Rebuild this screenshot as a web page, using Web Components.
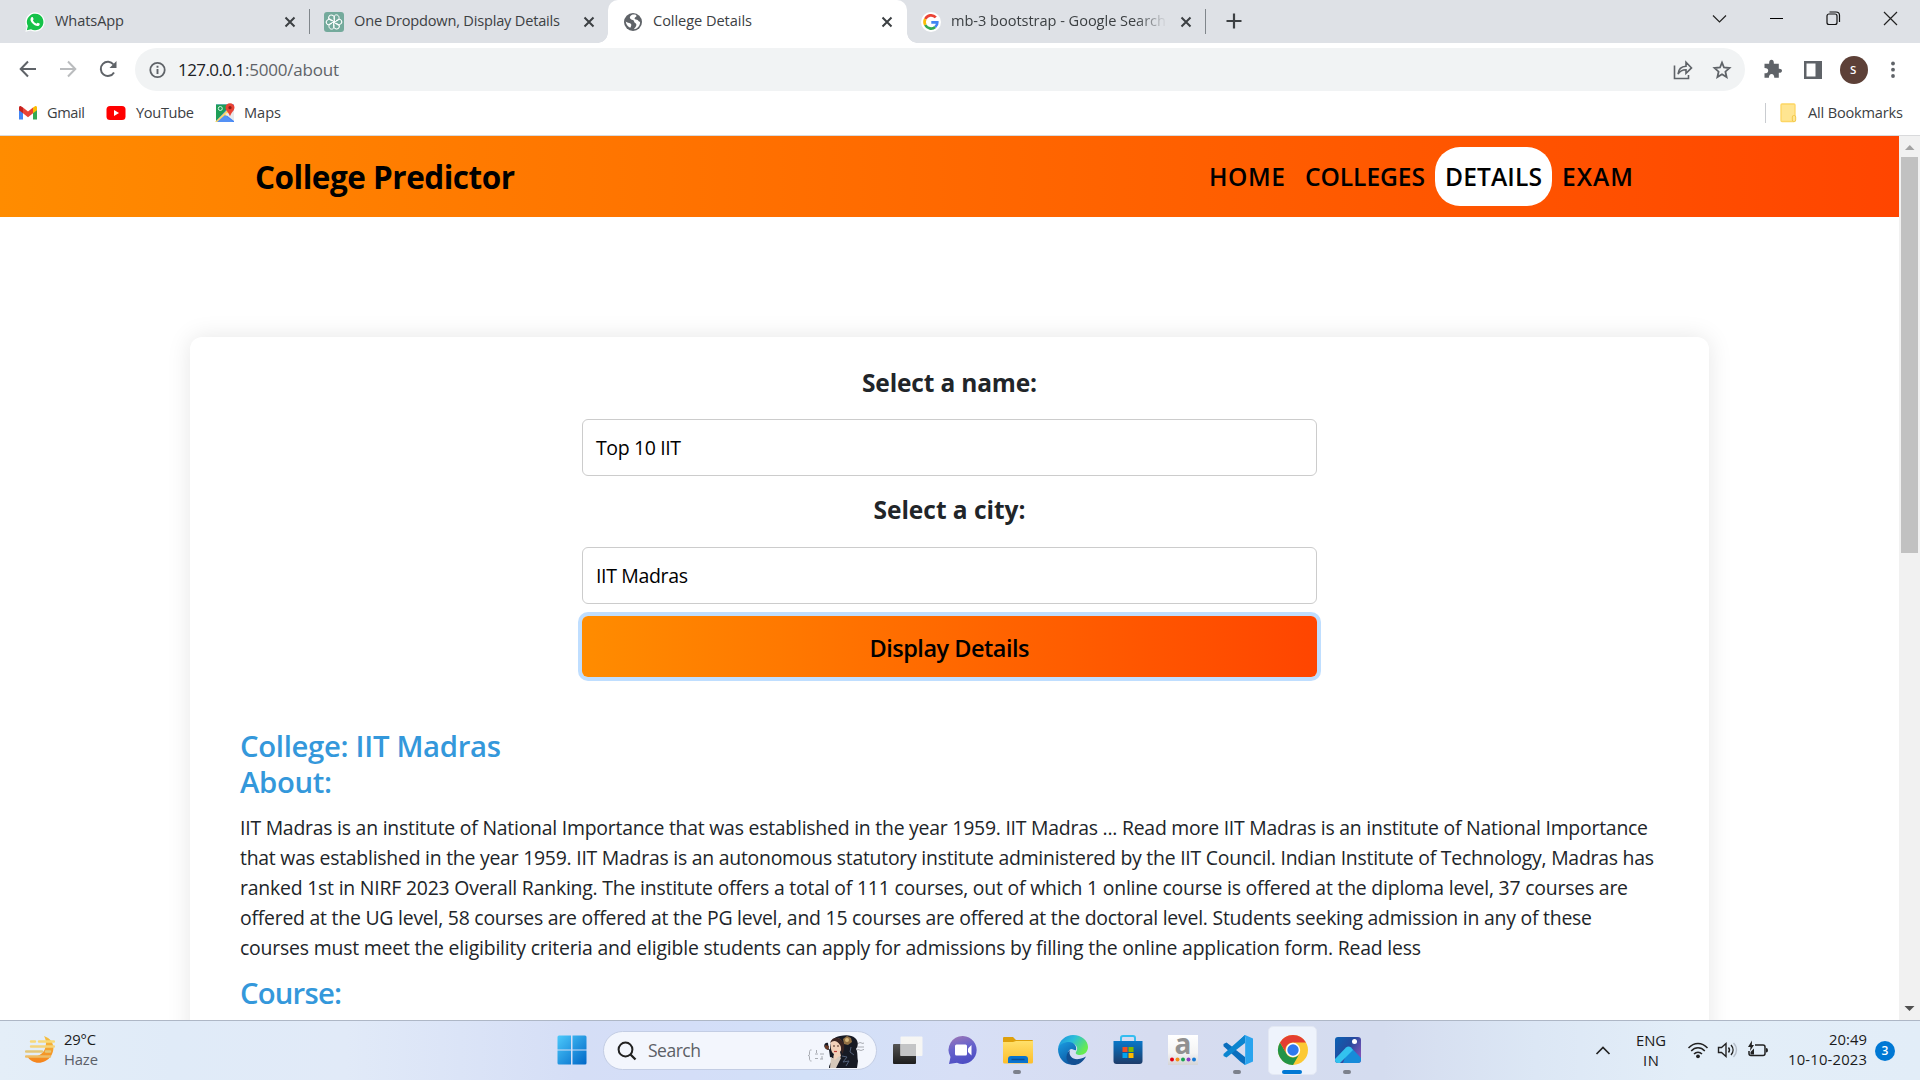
<!DOCTYPE html>
<html lang="en">
<head>
<meta charset="utf-8">
<title>College Details</title>
<style>
html,body{margin:0;padding:0}
body{width:1920px;height:1080px;overflow:hidden;background:#fff;font-family:"Open Sans","Noto Sans",sans-serif}
</style>
</head>
<body>
<desktop-screen></desktop-screen>
<script>
const define = (name, html) => {
  const t = document.createElement('template');
  t.innerHTML = html;
  customElements.define(name, class extends HTMLElement {
    constructor(){ super(); this.attachShadow({mode:'open'}).append(t.content.cloneNode(true)); }
  });
};

define('desktop-screen', `
<style>:host{display:flex;flex-direction:column;width:1920px;height:1080px;overflow:hidden}</style>
<tab-strip></tab-strip><address-row></address-row><bookmark-row></bookmark-row><page-view></page-view><task-bar></task-bar>`);

/* ---------- browser frame ---------- */
define('browser-tab', `
<style>
:host{display:flex;box-sizing:border-box;height:43px;position:relative;flex:none;align-items:center;color:#3c4043}
.i{display:flex;width:20px;height:20px;flex:none;margin-right:10px}
.x{margin-left:auto;display:block}
.sep{position:absolute;right:0;top:9px;width:1px;height:25px;background:#80868b}
:host([active]) .sep,:host([nosep]) .sep{display:none}
:host([active]){background:#fff;border-radius:10px 10px 0 0}
:host([active])::before,:host([active])::after{content:"";position:absolute;bottom:0;width:10px;height:10px}
:host([active])::before{left:-10px;background:radial-gradient(circle at 0 0,transparent 9.5px,#fff 10px)}
:host([active])::after{right:-10px;background:radial-gradient(circle at 100% 0,transparent 9.5px,#fff 10px)}
</style>
<span class="i"><slot name="icon"></slot></span><slot></slot>
<svg class="x" width="12" height="12" viewBox="0 0 12 12"><path d="M1.5 1.5l9 9M10.5 1.5l-9 9" stroke="#3c4043" stroke-width="2"/></svg>
<span class="sep"></span>`);

define('tab-strip', `
<style>
:host{display:flex;height:43px;background:#dee1e6;flex:none}
browser-tab:nth-of-type(1){width:310px;padding:0 14px 0 25px}
browser-tab:nth-of-type(2){width:298px;padding:0 13px 0 14px}
browser-tab:nth-of-type(3){width:299px;padding:0 14px 0 15px;z-index:1}
browser-tab:nth-of-type(4){width:299px;padding:0 14px 0 14px}
fit-text{margin-bottom:2px}
.fade{display:block;width:214px;overflow:hidden;-webkit-mask:linear-gradient(90deg,#000 185px,transparent 216px);mask:linear-gradient(90deg,#000 185px,transparent 216px)}
.plus{margin:13px 0 0 20px}
.win{display:flex;margin-left:auto;height:36px;align-items:center;padding-right:1px}
.win svg{width:57px;height:20px}
</style>
<browser-tab>
 <svg slot="icon" width="20" height="20" viewBox="0 0 20 20"><path d="M.4 19.8l1.4-5A9.6 9.6 0 1 1 5.6 18.400z" fill="#fff"/><path d="M1.800 18.300l1.100-4.200A8.300 8.300 0 1 1 6 17.200z" fill="#15c249"/><path d="M6.500 5.300c.5-.5 1.200-.4 1.400.1l.7 1.700c.1.400-.700 1.100-.6 1.400.8 1.500 1.900 2.500 3.400 3.200.4.100 1-1.100 1.400-.9l1.700.8c.5.300.1 1.400-.4 1.900-1 .9-2.500.7-4.300-.2-1.900-1-3.200-2.500-4-4.200-.6-1.500-.2-2.900.7-3.800z" fill="#fff"/></svg>
 <fit-text s="14.600" l="41" w="69">WhatsApp</fit-text></browser-tab>
<browser-tab nosep>
 <svg slot="icon" width="20" height="20" viewBox="0 0 20 20"><rect width="20" height="20" rx="3" fill="#74aa9c"/><g fill="none" stroke="#fff" stroke-width="1"><path d="M10 7.500V5.200c0-3 4.500-3.300 5 0v2.300l-5 3"/><path d="M10 7.500V5.200c0-3 4.500-3.300 5 0v2.300l-5 3" transform="rotate(60 10 10)"/><path d="M10 7.500V5.200c0-3 4.500-3.300 5 0v2.300l-5 3" transform="rotate(120 10 10)"/><path d="M10 7.500V5.200c0-3 4.500-3.300 5 0v2.300l-5 3" transform="rotate(180 10 10)"/><path d="M10 7.500V5.200c0-3 4.500-3.300 5 0v2.300l-5 3" transform="rotate(240 10 10)"/><path d="M10 7.500V5.200c0-3 4.500-3.300 5 0v2.300l-5 3" transform="rotate(300 10 10)"/></g></svg>
 <fit-text s="14.600" l="41" w="206">One Dropdown, Display Details</fit-text></browser-tab>
<browser-tab active>
 <svg slot="icon" width="20" height="20" viewBox="0 0 20 20"><circle cx="10" cy="10" r="9" fill="#5f6368"/><path d="M9.600 2.600c-2.800 1-3.500 3.200-2 4.500 1.500 1.200 3.400.8 3.500 2.500.1 1.500 2.300 1.500 2.300 3.200 0 2-1.800 3.200-2.600 4.500 3.200-.2 6.500-3 6.300-7.500-.8 0-1.500-.5-2-1.400-.5-1-1.800-.6-3-1.200-1-.6-.3-1.800.5-2.200 1-.5 1-1.400.5-2.100-1-.4-2.300-.5-3.500-.3zM2.700 9.500c.5 3.600 2.800 5.600 4.600 6.200 1-1.800 1.600-3.400.2-4.200-1.500-.9-3.300-.7-4.800-2z" fill="#fff"/></svg>
 <fit-text s="14.600" l="41" w="99">College Details</fit-text></browser-tab>
<browser-tab>
 <svg slot="icon" width="20" height="20" viewBox="0 0 20 20"><circle cx="10" cy="10" r="10" fill="#fff"/><g fill="none" stroke-width="2.700"><path d="M14.800 5.400A6.400 6.400 0 0 0 4.300 7" stroke="#ea4335"/><path d="M4.300 7a6.400 6.400 0 0 0 0 6" stroke="#fbbc05"/><path d="M4.300 13a6.400 6.400 0 0 0 9.900 2" stroke="#34a853"/><path d="M14.200 15c1.600-1.300 2.200-3 2.100-4.700h-6" stroke="#4285f4"/></g></svg>
 <span class="fade"><fit-text s="14.600" l="41" w="215">mb-3 bootstrap - Google Search</fit-text></span></browser-tab>
<svg class="plus" width="16" height="16" viewBox="0 0 16 16"><path d="M8 .5v15M.5 8h15" stroke="#3c4043" stroke-width="2.200"/></svg>
<div class="win">
<svg viewBox="0 0 57 20"><path d="M22 7.500l6.500 6.500L35 7.500" fill="none" stroke="#222" stroke-width="1.200"/></svg>
<svg viewBox="0 0 57 20"><path d="M22 10.500h13" stroke="#000" stroke-width="1"/></svg>
<svg viewBox="0 0 57 20"><g fill="none" stroke="#111" stroke-width="1.200"><rect x="22" y="6" width="10" height="10.500" rx="2"/><path d="M24.500 4h6.500c2 0 3.500 1.300 3.500 3.300V14"/></g></svg>
<svg viewBox="0 0 57 20"><path d="M22 4l13 13M35 4L22 17" stroke="#222" stroke-width="1.200"/></svg>
</div>`);

define('address-row', `
<style>
:host{display:flex;height:53px;align-items:center;background:#fff;flex:none;box-sizing:border-box;padding:0 0 0 18px}
svg{display:block;flex:none}
.b{margin:0 20px 1px 0}
.omni{display:flex;align-items:center;width:1610px;height:43px;border-radius:22px;background:#f1f3f4;margin-left:-3px;box-sizing:border-box;padding:0 13px 0 12px}
.sp{flex:1}.u{margin-left:11px;color:#202124}.v{color:#5f6368}
.r{display:flex;align-items:center}
.av{width:28px;height:28px;border-radius:50%;background:#5d4037;color:#fff;display:flex;align-items:center;justify-content:center;margin:0 17px 0 17px}
</style>
<svg class="b" width="20" height="20" viewBox="0 0 20 20"><path d="M10 2.500L2.700 10l7.300 7.500M3 10h15" fill="none" stroke="#5f6368" stroke-width="2"/></svg>
<svg class="b" width="20" height="20" viewBox="0 0 20 20"><path d="M10 2.500l7.300 7.500-7.300 7.500M17 10H2" fill="none" stroke="#babcbe" stroke-width="2"/></svg>
<svg class="b" width="20" height="20" viewBox="0 0 20 20"><path d="M16 13.500A7.100 7.100 0 1 1 15.500 5.500" fill="none" stroke="#5f6368" stroke-width="2"/><path d="M18.500 2v7h-7z" fill="#5f6368"/></svg>
<div class="omni">
<svg width="20" height="20" viewBox="0 0 20 20"><circle cx="10.500" cy="10" r="7.200" fill="none" stroke="#5f6368" stroke-width="1.800"/><path d="M10.500 9v5M10.500 5.700v2" stroke="#5f6368" stroke-width="1.900"/></svg>
<fit-text class="u" s="17" l="42" w="67">127.0.0.1</fit-text><fit-text class="v" s="17" l="42" w="94">:5000/about</fit-text>
<span class="sp"></span>
<svg width="22" height="22" viewBox="0 0 22 22" style="margin-right:18px"><path d="M2.500 6.500v13h14v-3.500M6 15c.5-5 3-7.500 8-7.800V3.300l5.500 5.600L14 14.300v-3.600c-4 0-6.200 1.300-8 4.300z" fill="none" stroke="#5f6368" stroke-width="1.600"/></svg>
<svg width="20" height="20" viewBox="0 0 20 20"><path d="M10 2.600l2 4.900 5.500.5-4.100 3.700 1.200 5.400-4.600-2.900-4.600 2.900 1.200-5.400L2.500 8l5.500-.5z" fill="none" stroke="#5f6368" stroke-width="1.800"/></svg>
</div>
<div class="r">
<svg width="20" height="20" viewBox="0 0 20 20" style="margin:0 0 2px 18px"><path d="M1.500 4.800h4.700C5.900 2 7 .8 8.500.8s2.600 1.200 2.300 4h5v5c2-.2 3.200.7 3.200 2s-1.200 2.200-3.200 2v5h-4.500c0-2.600-1-3.900-2.700-3.900s-2.700 1.300-2.700 3.900H1.500v-4.500c2.600 0 3.700-1 3.700-2.600S4.100 9.100 1.500 9.100z" fill="#5f6368"/></svg>
<svg width="20" height="20" viewBox="0 0 20 20" style="margin-left:20px"><path d="M1 1h18v18H1z" fill="#5f6368"/><path d="M3.500 3.500h9v13h-9z" fill="#fff"/></svg>
<div class="av"><fit-text s="11.500" l="28" w="8" weight="600">S</fit-text></div>
<svg width="20" height="20" viewBox="0 0 20 20"><g fill="#5f6368"><circle cx="8" cy="3.500" r="1.900"/><circle cx="8" cy="9.700" r="1.900"/><circle cx="8" cy="16" r="1.900"/></g></svg>
</div>`);

define('bookmark-row', `
<style>
:host{display:flex;height:40px;box-sizing:border-box;padding:0 17px 6px 18px;background:#fff;border-bottom:1px solid #d9dadc;align-items:center;color:#3c4043;flex:none}
svg{flex:none}
fit-text{margin-bottom:2px}
.bar{width:1px;height:20px;background:#c9ccd0;margin:0 13px 0 auto}
</style>
<svg width="20" height="20" viewBox="0 0 20 20"><path d="M1 5v11.500h4V8z" fill="#4285f4"/><path d="M19 5v11.500h-4V8z" fill="#34a853"/><path d="M15 4.500l2-1.300c1-.6 2 .2 2 1.300v2.800l-4 3z" fill="#fbbc04"/><path d="M5 10.300V4.500l5 4 5-4v5.800l-5 3.900z" fill="#ea4335"/><path d="M1 7.300V4.500c0-1.100 1-1.900 2-1.300l2 1.300v5.800z" fill="#c5221f"/></svg>
<fit-text style="margin-left:9px" s="14.600" l="34" w="38">Gmail</fit-text>
<svg width="20" height="20" viewBox="0 0 20 20" style="margin-left:21px"><rect x=".5" y="3" width="19" height="14" rx="3.500" fill="#f00"/><path d="M8 7l5 3-5 3z" fill="#fff"/></svg>
<fit-text style="margin-left:10px" s="14.600" l="34" w="58">YouTube</fit-text>
<svg width="20" height="20" viewBox="0 0 20 20" style="margin-left:21px"><path d="M1 1.500h18V19H1z" fill="#4285f4"/><path d="M1 1.500h15L1 18z" fill="#1e9e57"/><path d="M0 19L16 3l3 3L5 19z" fill="#fdd663"/><path d="M2 19l8-7 8 7z" fill="#5491f5"/><path d="M10 11l9-4v11z" fill="#e8eaed"/><circle cx="5.300" cy="5.500" r="2" fill="none" stroke="#d7f0df" stroke-width="1"/><path d="M15 .2c2.500 0 4.500 1.800 4.500 4.400 0 3-3.600 5.400-4.500 9-.9-3.600-4.500-6-4.500-9C10.500 2 12.500.2 15 .2z" fill="#ea4335"/><circle cx="15" cy="4.700" r="1.600" fill="#8c1d18"/></svg>
<fit-text style="margin-left:9px" s="14.600" l="34" w="37">Maps</fit-text>
<span class="bar"></span>
<svg width="20" height="20" viewBox="0 0 20 20"><rect x="2" y="1" width="14" height="17.500" rx="1" fill="#ffe591" stroke="#fdd663" stroke-width="1.300"/><rect x="13.300" y="12.500" width="3.400" height="6" rx="1.500" fill="#ffe591" stroke="#f2c94c"/></svg>
<fit-text style="margin-left:9px" s="14.600" l="34" w="95">All Bookmarks</fit-text>`);

/* ---------- web page ---------- */
define('page-view', `
<style>:host{display:flex;height:884px;flex:none;overflow:hidden;background:#fff}main{width:1899px;height:884px;overflow:hidden}</style>
<main><site-header></site-header><college-card></college-card></main><scroll-rail></scroll-rail>`);

define('scroll-rail', `
<style>:host{display:flex;flex-direction:column;align-items:center;width:21px;background:#f1f1f1}
svg{display:block;flex:none}i{display:block;width:17px;height:396px;background:#c1c1c1}.e{margin-top:auto}</style>
<svg width="21" height="21" viewBox="0 0 21 21"><path d="M6 14l4.800-5 4.700 5z" fill="#a3a3a3"/></svg><i></i>
<svg class="e" width="21" height="21" viewBox="0 0 21 21"><path d="M5.500 7h10l-5 5z" fill="#505050"/></svg>`);

define('nav-link', `
<style>:host{display:flex;height:59px;padding:0 10px;border-radius:25px;color:#000}:host([current]){background:#fff}</style><slot></slot>`);

define('site-header', `
<style>:host{display:flex;height:81px;align-items:center;box-sizing:border-box;padding:0 256px 0 255px;background:linear-gradient(90deg,#ff8c00,#ff4500);color:#000}
nav{display:flex;margin-left:auto}</style>
<fit-text s="31.500" l="83" w="260" weight="700">College Predictor</fit-text>
<nav>
<nav-link><fit-text s="24.600" l="60" w="76" weight="600">HOME</fit-text></nav-link>
<nav-link><fit-text s="24.600" l="60" w="120" weight="600">COLLEGES</fit-text></nav-link>
<nav-link current><fit-text s="24.600" l="60" w="97" weight="600">DETAILS</fit-text></nav-link>
<nav-link><fit-text s="24.600" l="60" w="71" weight="600">EXAM</fit-text></nav-link>
</nav>`);

define('select-field', `
<style>:host{display:flex;flex-direction:column;align-items:center;width:735px}
.box{display:flex;box-sizing:border-box;width:735px;height:57px;margin-top:var(--gap,17px);padding:0 13px;border:1px solid #ccc;border-radius:6px;background:#fff;color:#000}
.lab{color:#212529;display:flex}</style>
<div class="lab"><slot name="label"></slot></div><div class="box"><slot></slot></div>`);

define('action-button', `
<style>:host{display:flex;justify-content:center;box-sizing:border-box;width:735px;height:61px;padding-top:2px;border-radius:6px;background:linear-gradient(90deg,#ff8c00,#ff4500);box-shadow:0 0 0 4px #bfdeff;color:#000}</style><slot></slot>`);

define('college-card', `
<style>
:host{display:block;box-sizing:border-box;width:1519px;height:900px;margin:120px 0 0 190px;padding:26px 50px 0;border-radius:12px;background:#fff;box-shadow:0 0 25px rgba(0,0,0,.1)}
.form{display:flex;flex-direction:column;align-items:center}
.second{margin-top:14px;--gap:18px}
action-button{margin-top:12px}
.info{margin-top:51px;display:flex;flex-direction:column;align-items:flex-start;color:#3498db}
.para{display:flex;flex-direction:column;margin:13px 0 12px;color:#212529}
</style>
<div class="form">
<select-field><fit-text slot="label" s="24.500" l="39" w="175" weight="700">Select a name:</fit-text><fit-text s="19.500" l="56" w="85">Top 10 IIT</fit-text></select-field>
<select-field class="second"><fit-text slot="label" s="24.500" l="39" w="152" weight="700">Select a city:</fit-text><fit-text s="19.500" l="56" w="92">IIT Madras</fit-text></select-field>
<action-button><fit-text s="23.500" l="60" w="160" weight="600">Display Details</fit-text></action-button>
</div>
<div class="info">
<fit-text s="29.300" l="36" w="261" weight="600">College: IIT Madras</fit-text>
<fit-text s="29.300" l="36" w="92" weight="600">About:</fit-text>
<div class="para">
<fit-text s="19.400" l="30" w="1408">IIT Madras is an institute of National Importance that was established in the year 1959. IIT Madras ... Read more IIT Madras is an institute of National Importance</fit-text>
<fit-text s="19.400" l="30" w="1414">that was established in the year 1959. IIT Madras is an autonomous statutory institute administered by the IIT Council. Indian Institute of Technology, Madras has</fit-text>
<fit-text s="19.400" l="30" w="1388">ranked 1st in NIRF 2023 Overall Ranking. The institute offers a total of 111 courses, out of which 1 online course is offered at the diploma level, 37 courses are</fit-text>
<fit-text s="19.400" l="30" w="1352">offered at the UG level, 58 courses are offered at the PG level, and 15 courses are offered at the doctoral level. Students seeking admission in any of these</fit-text>
<fit-text s="19.400" l="30" w="1181">courses must meet the eligibility criteria and eligible students can apply for admissions by filling the online application form. Read less</fit-text>
</div>
<fit-text s="29.300" l="36" w="102" weight="600">Course:</fit-text>
</div>`);

/* ---------- taskbar ---------- */
define('task-icon', `
<style>:host{display:flex;position:relative;width:55px;height:59px;align-items:center;justify-content:center;flex:none}
.hl,.run{display:none;position:absolute}
:host([active]) .hl{display:block;left:3px;top:5px;width:47px;height:47px;border-radius:5px;background:#eef3fc;border:1px solid #e3e8f3}
.run{bottom:6px;left:23px;width:8px;height:4px;border-radius:2px;background:#7c818c}
:host([running]) .run{display:block}
:host([active]) .run{display:block;left:17px;width:20px;background:#0078d4}
::slotted(svg){position:relative;margin-bottom:1px;overflow:visible}</style>
<span class="hl"></span><slot></slot><span class="run"></span>`);

define('search-pill', `
<style>:host{display:flex;align-items:center;box-sizing:border-box;width:274px;height:39px;border:1px solid #c3cde4;border-radius:20px;background:#f3f6fd;color:#5c6066;padding-left:13px}
.art{margin-left:auto;margin-right:12px}</style>
<svg width="20" height="20" viewBox="0 0 20 20"><circle cx="8.500" cy="8.500" r="6.900" fill="none" stroke="#222" stroke-width="2"/><path d="M13.500 13.500l5 5" stroke="#222" stroke-width="2.300"/></svg>
<fit-text s="17.500" l="37" w="53" style="margin-left:11px">Search</fit-text>
<svg class="art" width="56" height="34" viewBox="0 0 56 34"><g fill="none" stroke="#a9acb3" stroke-width="1"><path d="M3.500 16c-2 0-2 .5-2 3s0 2.500-1.500 2.500c1.500 0 1.500.5 1.500 2.500s0 3 2 3M7 20h3M7 24.500h3M12 20h4M12 25h3M8.500 16v3M14 22v3"/><path d="M46 13h12M49 10l3-1.500 3 1 3-2M47 17l3-1.500 3 1 4-1.500"/></g>
<path d="M20 9c-4-1-5 4-2 6 1 1 3 1 4 0 0-8 4-12 10-13 6-1.500 12-1 15 2 4 3 3 9 1 11 2 3 1 7 2 12l-1 7H21c0-4 3-7 6-9l-5-2z" fill="#171a24"/><path d="M17 11l4 1-1 4-3-2z" fill="#6b3a25"/>
<path d="M23 7c3-4 8-4 11 0 1 5 0 8-2 11l1 4-6 6c-2-2-2-5-1-8-3-1-4-8-3-13z" fill="#f2d0b8"/><path d="M22 9c2-7 11-7 14 1 1 5-1 7-1 10-3-2-1-7-3-9-3-5-7-5-10-2z" fill="#3a2522"/><path d="M23 23l4 3 4-4 2 2-5 10h-6z" fill="#d5c8bb"/><path d="M35 5l4-3 4 2 1 4-4 3-4-1z" fill="#927044"/><circle cx="39" cy="6" r="2" fill="#d6b67a"/><path d="M34 22l5 1-4 5 6-1-3 5M43 13l-1 5 4 3" fill="none" stroke="#526079"/><path d="M25 12h2M29 12h2" stroke="#4a2a20"/><path d="M26 17.500h3" stroke="#bc3d36" stroke-width="1.200"/></svg>`);

define('task-bar', `
<style>
:host{display:flex;box-sizing:border-box;height:60px;border-top:1px solid #aeb7c6;align-items:center;flex:none;background:linear-gradient(90deg,#e4eef8 0,#e0ebf8 9%,#e1eaf8 18%,#d5def6 30%,#d4def8 36%,#d2e0f8 42%,#d7dff6 50%,#d6dcf0 60%,#d4dcef 72%,#dce7f5 80%,#e3eef8 88%,#e2edf8 100%);color:#1b1b1b}
svg{display:block;flex:none}
.wx{display:flex;flex-direction:column;margin:0 0 3px 9px}
.stk{display:flex;flex-direction:column;align-items:center;margin-bottom:3px}
.eng{margin-bottom:1px}
.rt{align-items:flex-end}
.apps{display:flex;align-items:center;margin-left:451px}
.tray{display:flex;align-items:center;margin-left:auto;padding-right:25px}
.n{display:flex;width:20px;height:20px;border-radius:50%;background:#0078d4;color:#fff;align-items:center;justify-content:center;margin-left:8px}
search-pill{margin:0 3px 0 8px}
</style>
<svg width="30" height="30" viewBox="0 0 30 30" style="margin:0 0 3px 25px"><defs><linearGradient id="sun" x2="0" y2="1"><stop stop-color="#f3c244"/><stop offset="1" stop-color="#f5821b"/></linearGradient></defs><path d="M19 2c9 3 12 12 7 20-6 9-19 9-24 0 8 3 19-1 19-13 0-3-1-5-2-7z" fill="url(#sun)"/><g stroke-width="2.400" stroke-linecap="round"><path d="M6 7.500h4M14 7.500h15" stroke="#f8d978"/><path d="M6 12.500h23" stroke="#f5d47a"/><path d="M1 17.500h16M21 17.500h4" stroke="#e3c779"/><path d="M1 22.500h24" stroke="#edbd68"/></g></svg>
<div class="wx"><fit-text s="14.800" l="20" w="32">29°C</fit-text><fit-text s="14.800" l="20" w="34" style="color:#5b6068">Haze</fit-text></div>
<div class="apps">
<task-icon style="width:46px"><svg width="30" height="30" viewBox="0 0 30 30"><defs><linearGradient id="w" x2="1" y2="1"><stop stop-color="#4cc9fb"/><stop offset="1" stop-color="#0067c7"/></linearGradient></defs><path d="M2 .5h12v14H.5V2Q.5.500 2 .5zM15.500.5H28q1.500 0 1.500 1.500v12.500h-14zM.5 15.500H14v14H2Q.5 29.500.5 28zM15.500 15.500h14V28q0 1.500-1.500 1.500H15.500z" fill="url(#w)"/></svg></task-icon>
<search-pill></search-pill>
<task-icon><svg width="30" height="28" viewBox="0 0 30 28"><defs><linearGradient id="tv" x2="0" y2="1"><stop stop-color="#555"/><stop offset="1" stop-color="#1d1d1d"/></linearGradient></defs><rect y="8" width="23" height="20" rx="1" fill="url(#tv)"/><rect x="7.500" y=".5" width="22" height="19.500" rx="1" fill="#f6f6f4"/><path d="M7.500 8H23v12H7.500z" fill="#c4c5c6"/></svg></task-icon>
<task-icon><svg width="30" height="30" viewBox="0 0 30 30"><defs><linearGradient id="ch" x2=".3" y2="1"><stop stop-color="#a178b4"/><stop offset=".5" stop-color="#6763cc"/><stop offset="1" stop-color="#4f4fc4"/></linearGradient></defs><path d="M15 1a14 14 0 1 1-6 26.800L1 29l1.500-7A14 14 0 0 1 15 1z" fill="url(#ch)"/><rect x="7" y="9.500" width="12" height="11" rx="1.500" fill="#fff"/><path d="M20 13.500l3.500-3.500v10.500L20 17z" fill="#fff"/></svg></task-icon>
<task-icon running><svg width="30" height="30" viewBox="0 0 30 30"><defs><linearGradient id="fo" x2="0" y2="1"><stop stop-color="#ffe06b"/><stop offset="1" stop-color="#fdbe2b"/></linearGradient></defs><path d="M0 3q0-1 1-1h9l3 3h16q1 0 1 1v8H0z" fill="#dea00c"/><path d="M0 7h10l3-1h17v21q0 1.500-1.500 1.500h-27Q0 28.500 0 27z" fill="url(#fo)"/><path d="M5 28v-4q0-3 3-3h14q3 0 3 3v4z" fill="#0873cf"/><path d="M8.500 24.500h13" stroke="#0c4f94" stroke-width="1.500"/></svg></task-icon>
<task-icon><svg width="30" height="30" viewBox="0 0 30 30"><defs><linearGradient id="e1" x1="0" x2="1" y2=".5"><stop stop-color="#1a8be0"/><stop offset=".5" stop-color="#2bbfd9"/><stop offset="1" stop-color="#66eb50"/></linearGradient><linearGradient id="e2" y1="0" y2="1" x2=".5"><stop stop-color="#1b9de2"/><stop offset="1" stop-color="#0c59a4"/></linearGradient></defs><path d="M0 14C1 5 8 0 15 0c9 0 15 6 15 12 0 5-4 8-8 8-3 0-5-1-4-3 3-4 0-9-6-9C6 8 1 10 0 14z" fill="url(#e1)"/><path d="M0 14c1-5 6-7 11-7 5 0 8 4 7 8-1 1-2-1-5-1-5 2-4 10 5 15C8 32 0 24 0 14z" fill="url(#e2)"/><path d="M12 15c-2 6 3 10 9 9 3-.5 5-1.500 7-2.500-3 6-8 8.500-12.500 8.500C8 29 6 20 12 15z" fill="#124f92"/></svg></task-icon>
<task-icon><svg width="30" height="30" viewBox="0 0 30 30"><defs><linearGradient id="st" x2="0" y2="1"><stop stop-color="#0877c9"/><stop offset="1" stop-color="#1e3c69"/></linearGradient></defs><path d="M8 7V3q0-2 2-2h10q2 0 2 2v4" fill="none" stroke="#35bdf0" stroke-width="2"/><path d="M.5 6h29v20q0 3-3 3h-23q-3 0-3-3z" fill="url(#st)"/><path d="M9.500 12h5v5h-5z" fill="#f25022"/><path d="M15.500 12h5v5h-5z" fill="#7fba00"/><path d="M9.500 18h5v5h-5z" fill="#00a4ef"/><path d="M15.500 18h5v5h-5z" fill="#ffb900"/></svg></task-icon>
<task-icon><svg width="30" height="30" viewBox="0 0 30 30"><defs><linearGradient id="am" x2="0" y2="1"><stop stop-color="#fff"/><stop offset=".6" stop-color="#f4f4f4"/><stop offset="1" stop-color="#d4d4d6"/></linearGradient></defs><rect width="30" height="30" fill="url(#am)"/><text x="15" y="19" text-anchor="middle" font-family="Open Sans" font-weight="700" font-size="28" fill="#919191">a</text><circle cx="4" cy="24.500" r="2" fill="#e60012"/><circle cx="9.500" cy="24.500" r="2" fill="#f39019"/><circle cx="15" cy="24.500" r="2" fill="#1aa251"/><circle cx="20.500" cy="24.500" r="2" fill="#8a3cc4"/><circle cx="26" cy="24.500" r="2" fill="#1478d4"/></svg></task-icon>
<task-icon running><svg width="30" height="30" viewBox="0 0 30 30"><path d="M22 8V0L9.500 12 3.500 7.500.5 9v2.200l17 15.500L22 30v-8z" fill="#0a6ebd"/><path d="M.5 19v2l3 1.500L22 8V0z" fill="#0b85cf"/><path d="M22 0l8 3.500v23L22 30l-1.500-1.200c1 .3 1.700 0 1.700-1V2.300c0-1-.8-1.400-1.700-1z" fill="#2aa4ee"/><path d="M22 8v14l-9-7z" fill="#d7dcef"/></svg></task-icon>
<task-icon active><svg width="30" height="30" viewBox="0 0 30 30"><circle cx="15" cy="15" r="15" fill="#fcc934"/><path d="M2 7.500L8.500 18.800A7.500 7.500 0 0 0 21.500 18.800L15 30A15 15 0 0 1 2 7.500z" fill="#229446"/><path d="M2 7.500A15 15 0 0 1 28 7.500H15a7.500 7.500 0 0 0-7.300 9.700z" fill="#e43e31"/><circle cx="15" cy="15" r="7.200" fill="#fff"/><circle cx="15" cy="15" r="5.700" fill="#2f79ed"/></svg></task-icon>
<task-icon running><svg width="26" height="26" viewBox="0 0 26 26"><defs><linearGradient id="ph" x2="1" y2=".6"><stop stop-color="#0b62b4"/><stop offset=".55" stop-color="#244a9e"/><stop offset="1" stop-color="#7b51b5"/></linearGradient><clipPath id="pc"><rect width="26" height="26" rx="3"/></clipPath></defs><g clip-path="url(#pc)"><rect width="26" height="26" fill="url(#ph)"/><path d="M14 10q2.500 0 4 2.500l9 9.500v4H8z" fill="#168bd9"/><path d="M0 22L11 10.500q2.500-2 5 0L18 13 5 26H0z" fill="#33c2ef"/><circle cx="19.500" cy="4.500" r="2.500" fill="#fff"/></g></svg></task-icon>
</div>
<div class="tray">
<svg width="16" height="16" viewBox="0 0 16 16" style="margin-right:25px"><path d="M1.500 11L8 4.500l6.500 6.500" fill="none" stroke="#222" stroke-width="1.700"/></svg>
<div class="stk eng"><fit-text s="14.800" l="20" w="30">ENG</fit-text><fit-text s="14.800" l="20" w="16">IN</fit-text></div>
<svg width="22" height="20" viewBox="0 0 22 20" style="margin:0 0 2px 21px"><g fill="none" stroke="#222" stroke-width="1.500"><path d="M1.500 8c5.500-6 13.500-6 19 0M4.200 11c4-4.300 9.600-4.300 13.600 0M7 14c2.300-2.500 5.700-2.500 8 0"/></g><circle cx="11" cy="16.300" r="1.900" fill="#222"/></svg>
<svg width="22" height="20" viewBox="0 0 22 20" style="margin:0 0 1px 8px"><g fill="none" stroke="#222" stroke-width="1.400"><path d="M1.500 7.500v5h3l4.500 4V3.500l-4.500 4z"/><path d="M11.500 7.500c1.200 1.500 1.200 3.500 0 5M14 5c2.700 3 2.700 7 0 10"/><path d="M16.500 3c4 4 4 10 0 14" stroke="#b5bdc8"/></g></svg>
<svg width="22" height="20" viewBox="0 0 22 20" style="margin:0 0 2px 8px"><g fill="none" stroke="#222" stroke-width="1.500"><path d="M8 5h8q2 0 2 2v6.500q0 2-2 2H4q-2 0-2-2V11"/></g><path d="M19 8q2 0 2 2.300T19 12.500zM5 .5L1 7h2.500L3 11l4-6H4.800zM3.500 14.500V12L7 8.500v6z" fill="#222"/></svg>
<div class="stk rt" style="margin-left:19px"><fit-text s="14.800" l="20" w="38">20:49</fit-text><fit-text s="14.800" l="20" w="79">10-10-2023</fit-text></div>
<div class="n"><fit-text s="12" l="19" w="7" weight="600">3</fit-text></div>
</div>`);

/* One line of text spread to an exact advance width: s = size, l = line height, w = width. */
customElements.define('fit-text', class extends HTMLElement {
  connectedCallback(){
    if (this.shadowRoot) return;
    const a = n => this.getAttribute(n);
    const root = this.attachShadow({mode:'open'});
    root.innerHTML = `<style>:host{display:block;flex:none;white-space:nowrap;width:${a('w')}px;font:${a('weight')||400} ${a('s')}px/${a('l')}px "Open Sans","Noto Sans",sans-serif}span{font-kerning:normal}</style><span><slot></slot></span>`;
    const span = root.querySelector('span');
    const n = this.textContent.length;
    const nat = span.getBoundingClientRect().width;
    if (n > 1 && nat) span.style.letterSpacing = ((+a('w') - nat) / (n - 1)) + 'px';
  }
});
</script>
</body>
</html>
